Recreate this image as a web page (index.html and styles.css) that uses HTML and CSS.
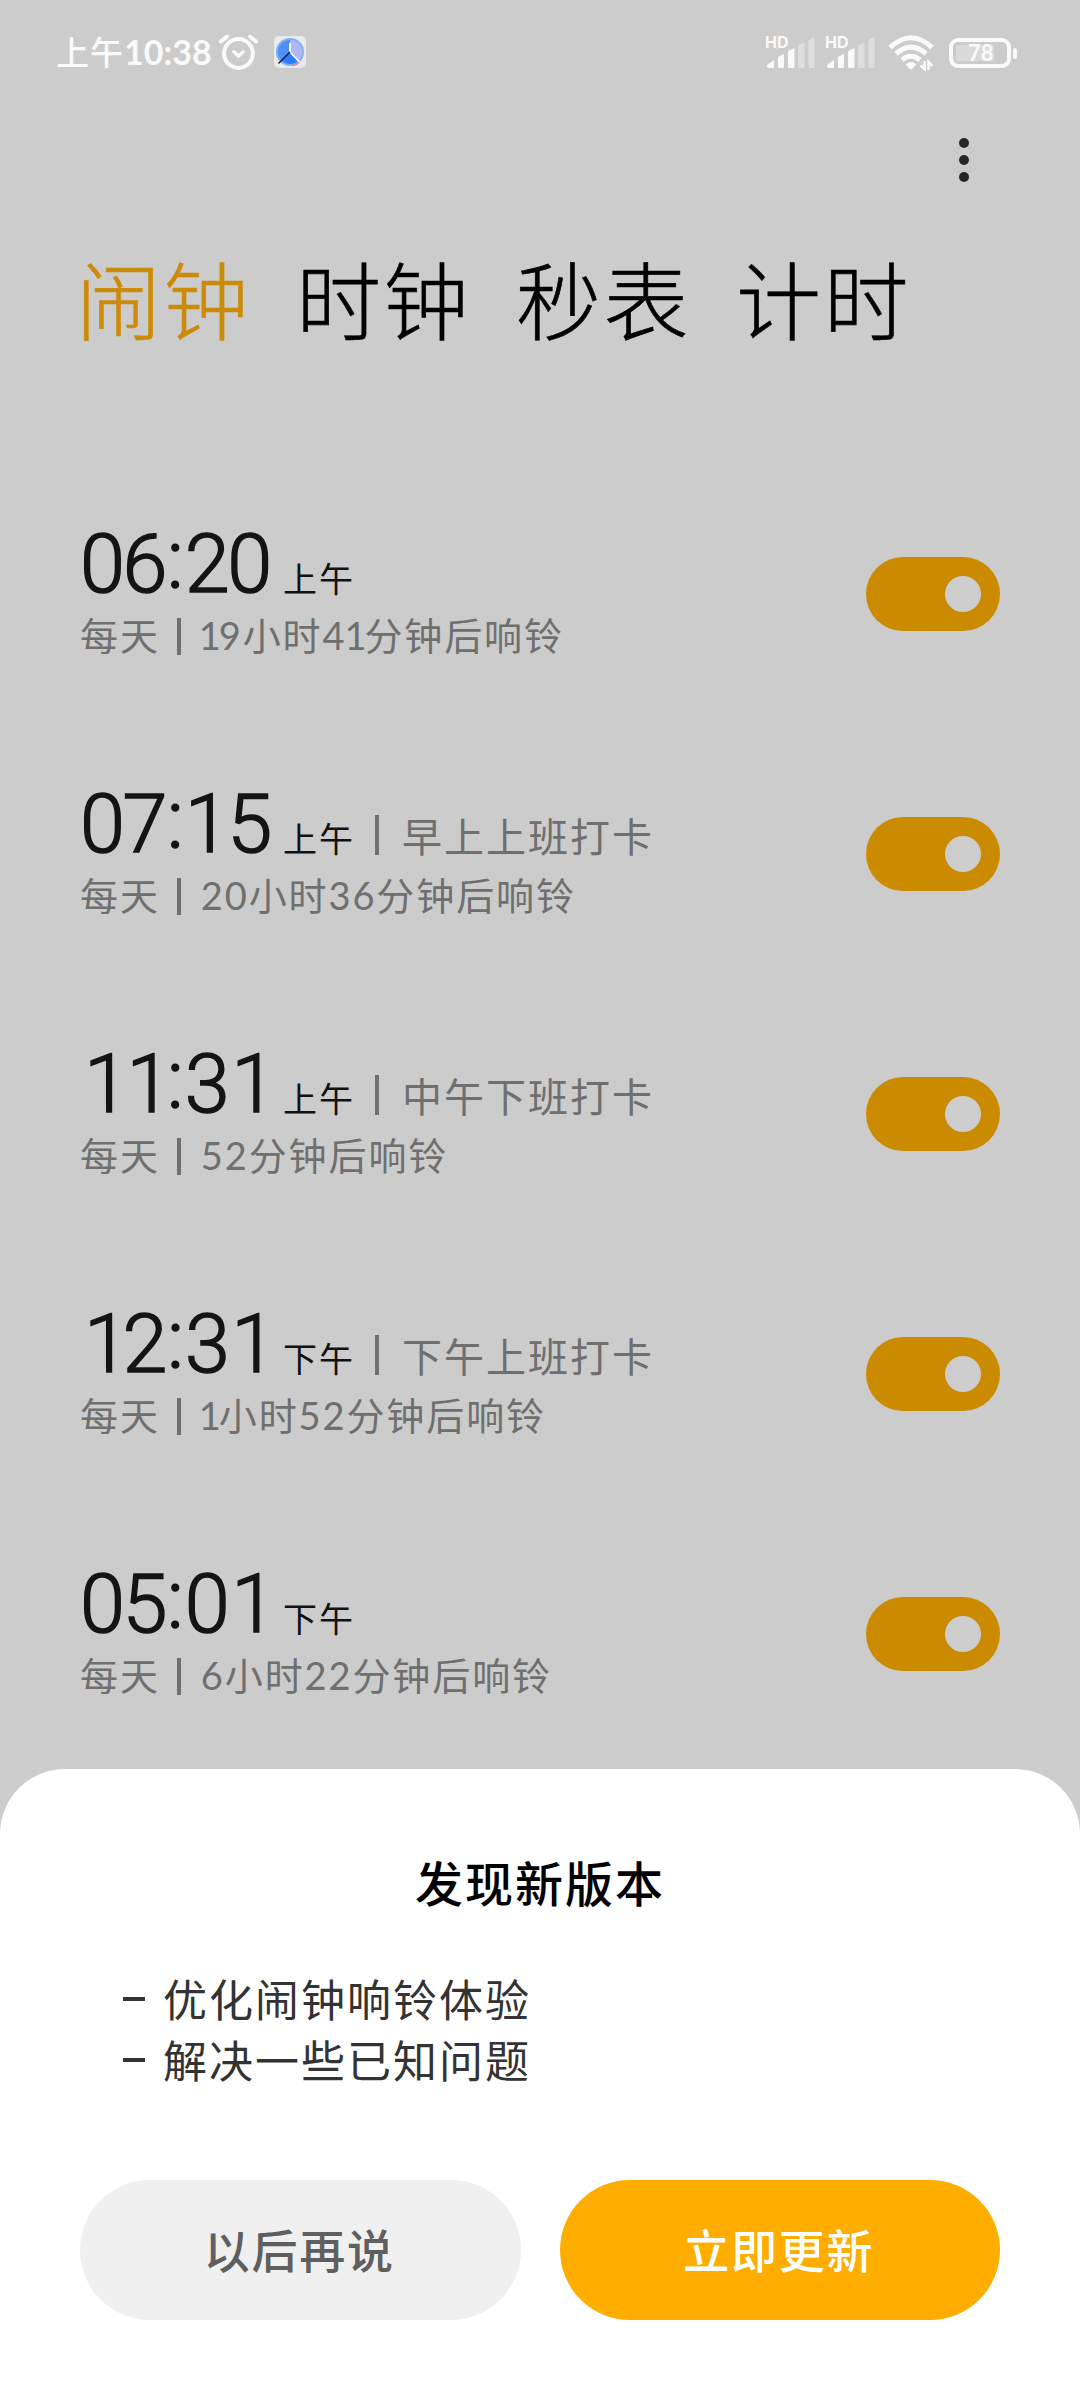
FILE: index.html
```html
<!DOCTYPE html>
<html lang="zh-CN">
<head>
    <meta charset="UTF-8">
    <meta name="viewport" content="width=device-width, initial-scale=1.0">
    <title>闹钟</title>
    <link rel="stylesheet" href="styles.css">
</head>
<body>
    <header class="status-bar">
        <div class="status-left">
            <span class="clock">上午<span class="clock-num">10:38</span></span>
            <svg class="icon-alarm" width="40" height="38" viewBox="0 0 40 38" fill="none" stroke="#fafafa" stroke-linecap="round" stroke-linejoin="round">
                <circle cx="19.5" cy="20.5" r="14.4" stroke-width="4"/>
                <path d="M2 8.5L8 3.5M37 8.5L31 3.5" stroke-width="4"/>
                <path d="M14.8 18.8L19.5 23L24.2 18.8" stroke-width="3.4"/>
            </svg>
            <svg class="icon-app" width="32" height="32" viewBox="0 0 32 32">
                <rect width="32" height="32" rx="5" fill="#e9eaec"/>
                <circle cx="16" cy="16" r="14" fill="#7cb0ee"/>
                <circle cx="16" cy="16" r="12" fill="#4d90fb"/>
                <path d="M16 16V4A12 12 0 0 1 24.5 25Z" fill="#b0b6fa"/>
                <path d="M16 16L8 24A12 12 0 0 0 24.5 25Z" fill="#2f7dfc"/>
                <path d="M18 29.5Q23 29 25.5 25.5" stroke="#d98aa6" stroke-width="1.5" fill="none"/>
                <path d="M16 7V16L25.5 26" stroke="#fff" stroke-width="1.8" fill="none"/>
                <path d="M16 16L4.5 27.5" stroke="#10131c" stroke-width="1.3"/>
            </svg>
        </div>
        <div class="status-right">
            <div class="signal">
                <span class="hd">HD</span>
                <svg width="52" height="34" viewBox="0 0 52 34">
                    <path d="M2 29L9 24V32H4Q2 32 2 30Z" fill="#fafafa"/>
                    <path d="M13 22Q13 20.500 14.500 20L19 18V30.500Q19 32 17.500 32H14.500Q13 32 13 30.500Z" fill="#fafafa"/>
                    <path d="M23 17Q23 15 24.500 14.200L29.500 12V30.500Q29.500 32 28 32H24.500Q23 32 23 30.500Z" fill="#fafafa"/>
                    <path d="M33 11Q33 9 34.500 8.200L39.500 6.500V30.500Q39.500 32 38 32H34.500Q33 32 33 30.500Z" fill="#dedede"/>
                    <path d="M43.500 6Q43.500 4 45 3L49.500 1V30.500Q49.500 32 48 32H45Q43.500 32 43.500 30.500Z" fill="#dedede"/>
                </svg>
            </div>
            <div class="signal">
                <span class="hd">HD</span>
                <svg width="52" height="34" viewBox="0 0 52 34">
                    <path d="M2 29L9 24V32H4Q2 32 2 30Z" fill="#fafafa"/>
                    <path d="M13 22Q13 20.500 14.500 20L19 18V30.500Q19 32 17.500 32H14.500Q13 32 13 30.500Z" fill="#fafafa"/>
                    <path d="M23 17Q23 15 24.500 14.200L29.500 12V30.500Q29.500 32 28 32H24.500Q23 32 23 30.500Z" fill="#fafafa"/>
                    <path d="M33 11Q33 9 34.500 8.200L39.500 6.500V30.500Q39.500 32 38 32H34.500Q33 32 33 30.500Z" fill="#dedede"/>
                    <path d="M43.500 6Q43.500 4 45 3L49.500 1V30.500Q49.500 32 48 32H45Q43.500 32 43.500 30.500Z" fill="#dedede"/>
                </svg>
            </div>
            <svg class="icon-wifi" width="48" height="36" viewBox="0 0 48 36" fill="none" stroke="#fafafa">
                <path d="M2 12.500Q23 -7 44 12.500" stroke-width="5"/>
                <path d="M8 18.800Q23 5.500 38 18.800" stroke-width="5"/>
                <path d="M14 25Q23 17.500 32 25" stroke-width="5"/>
                <path d="M19 29.500Q23 26.500 27 29.500L23 33.500Z" fill="#fafafa" stroke-width="2" stroke-linejoin="round"/>
                <path d="M36.500 26V34L32.500 30.500M40.500 35V27L44.500 31" stroke-width="2.600"/>
            </svg>
            <div class="battery">
                <div class="battery-body">
                    <div class="battery-fill"></div>
                    <span class="battery-text">78</span>
                </div>
                <div class="battery-nub"></div>
            </div>
        </div>
    </header>

    <div class="toolbar">
        <div class="menu">
            <i></i><i></i><i></i>
        </div>
    </div>

    <nav class="tabs">
        <span class="tab active">闹钟</span>
        <span class="tab">时钟</span>
        <span class="tab">秒表</span>
        <span class="tab">计时</span>
    </nav>

    <main class="alarm-list">
        <div class="alarm">
            <div class="info">
                <div class="top">
                    <span class="time">06<span class="colon">:</span>20</span>
                    <span class="ampm">上午</span>
                </div>
                <div class="sub">每天<span class="bar"></span><span class="one">1</span>9小时4<span class="one">1</span>分钟后响铃</div>
            </div>
            <div class="switch"><div class="knob"></div></div>
        </div>
        <div class="alarm">
            <div class="info">
                <div class="top">
                    <span class="time">07<span class="colon">:</span>15</span>
                    <span class="ampm">上午</span>
                    <span class="label">早上上班打卡</span>
                </div>
                <div class="sub">每天<span class="bar"></span>20小时36分钟后响铃</div>
            </div>
            <div class="switch"><div class="knob"></div></div>
        </div>
        <div class="alarm">
            <div class="info">
                <div class="top">
                    <span class="time"><span class="shift">11</span><span class="colon">:</span>3<span class="shift">1</span></span>
                    <span class="ampm">上午</span>
                    <span class="label">中午下班打卡</span>
                </div>
                <div class="sub">每天<span class="bar"></span>52分钟后响铃</div>
            </div>
            <div class="switch"><div class="knob"></div></div>
        </div>
        <div class="alarm">
            <div class="info">
                <div class="top">
                    <span class="time"><span class="shift">1</span>2<span class="colon">:</span>3<span class="shift">1</span></span>
                    <span class="ampm">下午</span>
                    <span class="label">下午上班打卡</span>
                </div>
                <div class="sub">每天<span class="bar"></span><span class="one">1</span>小时52分钟后响铃</div>
            </div>
            <div class="switch"><div class="knob"></div></div>
        </div>
        <div class="alarm">
            <div class="info">
                <div class="top">
                    <span class="time">05<span class="colon">:</span>0<span class="shift">1</span></span>
                    <span class="ampm">下午</span>
                </div>
                <div class="sub">每天<span class="bar"></span>6小时22分钟后响铃</div>
            </div>
            <div class="switch"><div class="knob"></div></div>
        </div>
    </main>

    <section class="sheet">
        <h2>发现新版本</h2>
        <ul class="changes">
            <li>优化闹钟响铃体验</li>
            <li>解决一些已知问题</li>
        </ul>
        <div class="buttons">
            <button class="later">以后再说</button>
            <button class="update">立即更新</button>
        </div>
    </section>
</body>
</html>
```
FILE: styles.css
```css
* {
    box-sizing: border-box;
}

body {
    margin: 0;
    width: 1080px;
    height: 2400px;
    overflow: hidden;
    display: flex;
    flex-direction: column;
    background: #ccc;
    font-family: "Noto Sans CJK SC", sans-serif;
}

/* status bar */
.status-bar {
    height: 106px;
    padding: 0 63px 0 56px;
    display: flex;
    justify-content: space-between;
    align-items: center;
    color: #fafafa;
}

.status-left, .status-right {
    display: flex;
    align-items: center;
}

.clock {
    width: 155px;
    margin-top: -3px;
    font-size: 33px;
    line-height: 40px;
    font-weight: 500;
    letter-spacing: 1px;
    white-space: nowrap;
}

.clock-num {
    font-family: Lato, "Noto Sans CJK SC", sans-serif;
    font-weight: 700;
    font-size: 34px;
    letter-spacing: 0;
}

.icon-alarm {
    margin-left: 8px;
    margin-top: -2px;
}

.icon-app {
    margin-left: 15px;
    margin-top: -2px;
}

.signal {
    position: relative;
    width: 60px;
    height: 34px;
}

.hd {
    position: absolute;
    left: 0;
    top: -2px;
    font: 700 16px/16px Inter, sans-serif;
}

.icon-wifi {
    margin-left: 3px;
}

.battery {
    margin-left: 13px;
    display: flex;
    align-items: center;
    gap: 2px;
}

.battery-body {
    position: relative;
    width: 62px;
    height: 30px;
    border: 4px solid #fafafa;
    border-radius: 9px;
    padding: 3px;
}

.battery-fill {
    width: 38px;
    height: 16px;
    border-radius: 2px;
    background: #dadada;
}

.battery-text {
    position: absolute;
    left: 15px;
    top: 0;
    font: 700 22px/22px Lato, sans-serif;
}

.battery-nub {
    width: 4px;
    height: 11px;
    border-radius: 2px;
    background: #fafafa;
}

/* menu */
.toolbar {
    height: 108px;
    padding: 32px 111px 0 0;
    display: flex;
    justify-content: flex-end;
}

.menu {
    display: flex;
    flex-direction: column;
    gap: 7px;
}

.menu i {
    width: 10px;
    height: 10px;
    border-radius: 50%;
    background: #262626;
}

.tabs {
    height: 296px;
    padding: 21px 0 0 76px;
    display: flex;
    gap: 44px;
}

.tab {
    width: 176px;
    font-size: 85px;
    line-height: 124px;
    letter-spacing: 2.5px;
    font-weight: 300;
    white-space: nowrap;
    color: #000;
    -webkit-text-stroke: 0.6px currentColor;
}

.tab.active {
    color: #cb8b08;
}

/* alarms */
.alarm {
    height: 260px;
    padding: 7px 80px 0;
    display: flex;
    justify-content: space-between;
}

.top {
    display: flex;
    align-items: baseline;
    height: 90px;
    white-space: nowrap;
}

.time {
    width: 203px;
    font-family: Roboto, sans-serif;
    font-weight: 300;
    font-size: 81px;
    line-height: 96px;
    letter-spacing: -2.5px;
    color: #141414;
    -webkit-text-stroke: 1.5px #141414;
}

.colon {
    display: inline-block;
    width: 20px;
    padding-left: 2px;
    line-height: 60px;
    vertical-align: 4px;
}

/* the narrow 1 is centred in its digit cell */
.shift {
    position: relative;
    left: 4px;
}

.ampm {
    font-size: 34px;
    letter-spacing: 2px;
    color: #111;
}

.label {
    margin-left: 20px;
    padding-left: 23px;
    font-size: 40px;
    line-height: 40px;
    letter-spacing: 2px;
    color: #6f6f6f;
    border-left: 4px solid #6f6f6f;
}

.sub {
    font-family: Lato, "Noto Sans CJK SC", sans-serif;
    font-size: 38px;
    line-height: 56px;
    letter-spacing: 1.9px;
    white-space: nowrap;
    color: #6f6f6f;
}

.bar {
    display: inline-block;
    width: 4px;
    height: 37px;
    margin: 0 20px 0 17px;
    vertical-align: -5px;
    background: #6f6f6f;
}

.one {
    margin: 0 -4px 0 -2px;
}

.switch {
    width: 134px;
    height: 74px;
    margin-top: 40px;
    padding: 19px;
    border-radius: 37px;
    background: #cb8b00;
    display: flex;
    justify-content: flex-end;
}

.knob {
    width: 36px;
    height: 36px;
    border-radius: 50%;
    background: #cdcdcd;
}

.alarm-list {
    flex: 1;
    min-height: 0;
    overflow: hidden;
}

/* update sheet */
.sheet {
    height: 631px;
    flex-shrink: 0;
    padding: 77px 80px;
    border-radius: 65px 65px 0 0;
    background: #fff;
}

h2 {
    margin: 0;
    font-size: 48px;
    line-height: 70px;
    font-weight: 500;
    letter-spacing: 2px;
    text-align: center;
    color: #000;
}

.changes {
    list-style: none;
    margin: 51px 0 0;
    padding: 0 0 0 43px;
    height: 213px;
}

.changes li {
    display: flex;
    align-items: center;
    height: 61px;
    font-size: 44px;
    letter-spacing: 2px;
    color: #333;
}

.changes li::before {
    content: "";
    width: 22px;
    height: 4px;
    margin: 2px 18px 0 0;
    background: #333;
}

.buttons {
    display: flex;
    gap: 39px;
}

.buttons button {
    flex: 1;
    height: 140px;
    padding: 0 2px 5px 0;
    border: none;
    border-radius: 70px;
    font-family: inherit;
    font-size: 46px;
    font-weight: 500;
    letter-spacing: 1.8px;
}

.later {
    background: #f0f0f0;
    color: #5f5f5f;
}

.update {
    background: #ffae00;
    color: #fff;
}
```
